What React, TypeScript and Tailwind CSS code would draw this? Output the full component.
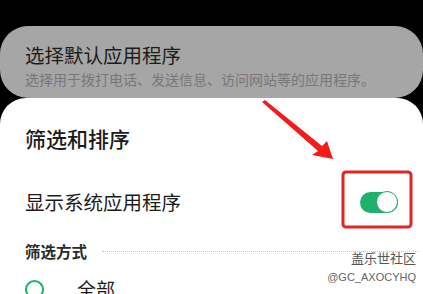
export default function App() {
  const font = { fontFamily: '"Noto Sans CJK SC", "Noto Sans", sans-serif' };
  return (
    <div className="relative w-[423px] h-[294px] overflow-hidden bg-black" style={font}>
      <div className="pt-[26px]">
        {/* dimmed card behind the sheet */}
        <div className="h-[72px] rounded-[28px] bg-[#a6a6a6] pl-[25px] pt-[16px]">
          <div className="text-[19.5px] leading-[26px] text-[#1c1c1c]">选择默认应用程序</div>
          <div className="text-[14px] leading-[20px] text-[#777777] mt-[1px]">选择用于拨打电话、发送信息、访问网站等的应用程序。</div>
        </div>

        {/* bottom sheet */}
        <div className="h-[200px] rounded-t-[26px] bg-white px-[25px] pt-[26px]">
          <div className="text-[21px] leading-[28px] font-medium text-[#1c1c1c]">筛选和排序</div>
          <div className="flex items-center justify-between mt-[37px]">
            <span className="text-[19.5px] leading-[26px] text-[#1c1c1c]">显示系统应用程序</span>
            <div className="w-[38px] h-[21px] rounded-full bg-[#1fb06a] flex items-center justify-end">
              <div className="w-[22px] h-[22px] rounded-full bg-white border-[1.5px] border-[#1fb06a]" />
            </div>
          </div>
          <div className="flex items-center mt-[25px] gap-[15px]">
            <span className="text-[15.5px] leading-[22px] font-bold text-[#2a2a2a]">筛选方式</span>
            <div className="flex-1 border-t-[1.5px] border-dotted border-[#c4c4c4] mr-[-20px]" />
          </div>
          <div className="flex items-center mt-[14px] gap-[33px]">
            <div className="w-[19px] h-[19px] rounded-full border-[2px] border-[#1fb06a] shrink-0" />
            <span className="text-[19px] leading-[26px] text-[#1c1c1c]">全部</span>
          </div>
        </div>
      </div>

      {/* annotations */}
      <svg className="absolute left-0 top-0" width="423" height="294">
        <polygon points="262,102 265,100 322,146 327,141 333,159 312,155 318,151" fill="#f21c1c" />
        <rect x="343" y="172" width="68" height="55" rx="3" fill="none" stroke="#e32424" strokeWidth="3" />
      </svg>

      <div className="absolute right-[7px] top-[249px] flex flex-col items-end">
        <span className="text-[13px] leading-[18px] text-[#555555]">盖乐世社区</span>
        <span className="text-[11px] leading-[16px] text-[#666666] mt-[2px]" style={{ fontFamily: '"Liberation Sans", sans-serif' }}>@GC_AXOCYHQ</span>
      </div>
    </div>
  );
}
